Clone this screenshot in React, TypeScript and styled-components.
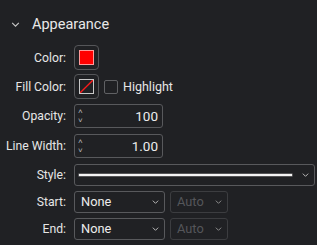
import styled, { createGlobalStyle } from "styled-components"

const GlobalStyle = createGlobalStyle`
  html, body {
    margin: 0;
    padding: 0;
    background: #202124;
  }
  body {
    font-family: Roboto, "Liberation Sans", sans-serif;
    color: #e6e6e6;
  }
`

function Chevron (props: { color?: string, width?: number }) {
  const w = props.width || 7
  return <svg width={w} height={Math.round(w * 0.6)} viewBox="0 0 10 6" fill="none">
    <path d="M1 1 L5 5 L9 1" stroke={props.color || '#d0d0d0'} strokeWidth="1.3" />
  </svg>
}

function App () {
  return <Panel>
    <GlobalStyle />
    <Header>
      <Chevron color={'#c8c8c8'} width={9} />
      <HeaderTitle>{'Appearance'}</HeaderTitle>
    </Header>
    <Form>
      <Label>{'Color:'}</Label>
      <Field>
        <SwatchButton>
          <Swatch />
        </SwatchButton>
      </Field>

      <Label>{'Fill Color:'}</Label>
      <Field>
        <SwatchButton>
          <NoFillSwatch>
            <svg width="13" height="13" viewBox="0 0 13 13">
              <line x1="0" y1="13" x2="13" y2="0" stroke="#ff1a1a" strokeWidth="1.3" />
            </svg>
          </NoFillSwatch>
        </SwatchButton>
        <CheckLabel>
          <CheckBox />
          {'Highlight'}
        </CheckLabel>
      </Field>

      <Label>{'Opacity:'}</Label>
      <Field>
        <NumberBox>
          <Spinner>
            <span>{'˄'}</span>
            <span>{'˅'}</span>
          </Spinner>
          <NumberValue>{'100'}</NumberValue>
        </NumberBox>
      </Field>

      <Label>{'Line Width:'}</Label>
      <Field>
        <NumberBox>
          <Spinner>
            <span>{'˄'}</span>
            <span>{'˅'}</span>
          </Spinner>
          <NumberValue>{'1.00'}</NumberValue>
        </NumberBox>
      </Field>

      <Label>{'Style:'}</Label>
      <Field>
        <Select $width={241} $height={22}>
          <LinePreview />
          <Chevron />
        </Select>
      </Field>

      <Label>{'Start:'}</Label>
      <Field>
        <Select $width={91} $height={22}>
          <SelectText>{'None'}</SelectText>
          <Chevron />
        </Select>
        <Select $width={58} $height={22} $disabled>
          <SelectText $disabled>{'Auto'}</SelectText>
          <Chevron color={'#9a9a9a'} />
        </Select>
      </Field>

      <Label>{'End:'}</Label>
      <Field>
        <Select $width={91} $height={22}>
          <SelectText>{'None'}</SelectText>
          <Chevron />
        </Select>
        <Select $width={58} $height={22} $disabled>
          <SelectText $disabled>{'Auto'}</SelectText>
          <Chevron color={'#9a9a9a'} />
        </Select>
      </Field>
    </Form>
  </Panel>
}

const Panel = styled.div`
  width: 317px;
  height: 245px;
  background: #202124;
  overflow: hidden;
`

const Header = styled.div`
  display: flex;
  align-items: center;
  gap: 12px;
  height: 43px;
  padding: 5px 0 0 11px;
  box-sizing: border-box;
`

const HeaderTitle = styled.span`
  font-size: 14.5px;
  color: #e8e8e8;
`

const Form = styled.div`
  display: grid;
  grid-template-columns: 66px 1fr;
  grid-template-rows: 29px 29px 30px 30px 27px 27px 27px;
  column-gap: 8px;
`

const Label = styled.div`
  text-align: right;
  font-size: 12.2px;
  color: #e6e6e6;
  align-self: center;
`

const Field = styled.div`
  display: flex;
  align-items: center;
  gap: 5px;
`

const SwatchButton = styled.div`
  width: 25px;
  height: 25px;
  box-sizing: border-box;
  border: 1px solid #555659;
  border-radius: 4px;
  display: flex;
  align-items: center;
  justify-content: center;
`

const Swatch = styled.div`
  width: 15px;
  height: 15px;
  box-sizing: border-box;
  background: #ff0000;
  border: 1px solid #ff9a9a;
`

const NoFillSwatch = styled.div`
  width: 15px;
  height: 15px;
  box-sizing: border-box;
  border: 1px solid #c8c8c8;
  display: flex;
`

const CheckLabel = styled.label`
  display: flex;
  align-items: center;
  gap: 5px;
  font-size: 12.5px;
  color: #e6e6e6;
`

const CheckBox = styled.span`
  width: 14px;
  height: 14px;
  box-sizing: border-box;
  border: 1px solid #606164;
  border-radius: 2px;
`

const NumberBox = styled.div`
  width: 89px;
  height: 24px;
  box-sizing: border-box;
  border: 1px solid #58595c;
  border-radius: 3px;
  display: flex;
  align-items: center;
  padding: 0 4px 0 3px;
`

const Spinner = styled.div`
  display: flex;
  flex-direction: column;
  font-size: 8px;
  line-height: 9px;
  color: #bdbdbd;
`

const NumberValue = styled.span`
  flex: 1;
  text-align: right;
  font-size: 13.5px;
  color: #ececec;
`

const Select = styled.div<{ $width: number, $height: number, $disabled?: boolean }>`
  width: ${p => p.$width}px;
  height: ${p => p.$height}px;
  box-sizing: border-box;
  border: 1px solid ${p => p.$disabled ? '#3c3d40' : '#58595c'};
  border-radius: 3px;
  display: flex;
  align-items: center;
  padding: 0 5px 0 6px;
  gap: 6px;
`

const SelectText = styled.span<{ $disabled?: boolean }>`
  flex: 1;
  font-size: 12.8px;
  color: ${p => p.$disabled ? '#55565a' : '#ececec'};
`

const LinePreview = styled.div`
  flex: 1;
  height: 2px;
  background: #f4f4f4;
  box-shadow: 0 0 0 0.5px #888;
  margin-left: -2px;
  margin-right: 4px;
`

export default App
